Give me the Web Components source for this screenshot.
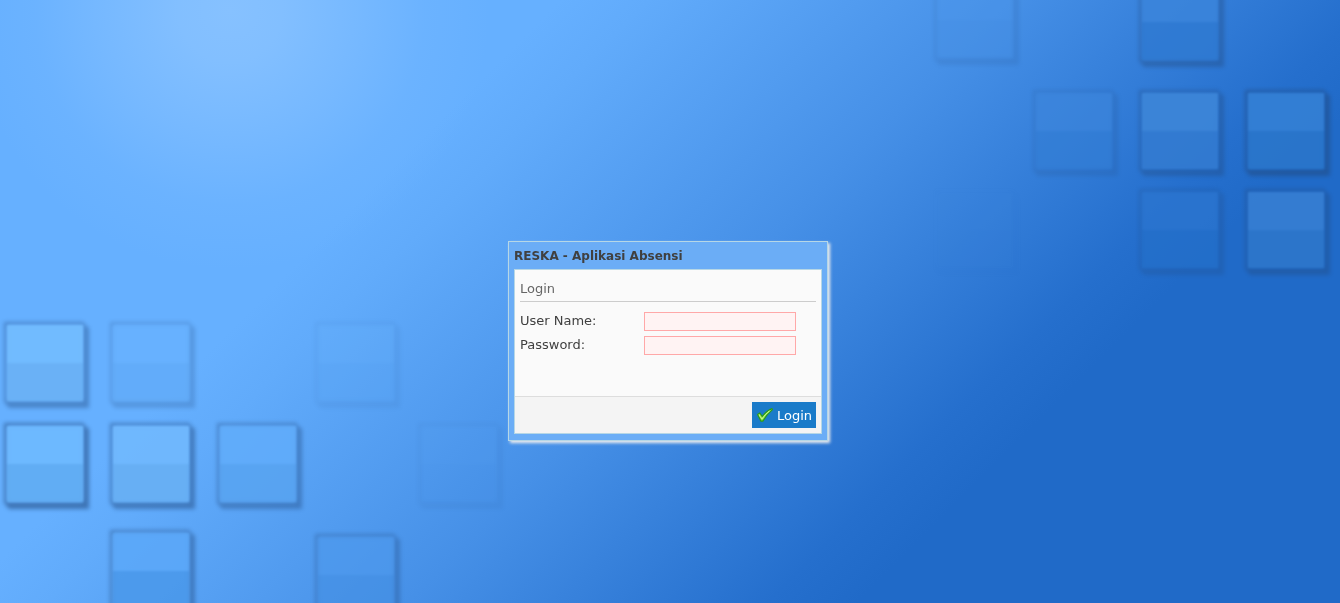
<!DOCTYPE html>
<html lang="id">
<head>
<meta charset="utf-8">
<title>RESKA - Aplikasi Absensi</title>
<style>
  html, body { margin: 0; height: 100%; }
  body { background: #226ac8; font: 13px/18px "DejaVu Sans", Verdana, sans-serif; color: #404040; }
</style>
</head>
<body>
<reska-desktop>
  <login-window heading="RESKA - Aplikasi Absensi">
    <login-form></login-form>
    <ok-button slot="footer">Login</ok-button>
  </login-window>
</reska-desktop>

<script>
  const define = (name, html, setup) => {
    const template = document.createElement('template');
    template.innerHTML = html;
    customElements.define(name, class extends HTMLElement {
      constructor() {
        super();
        this.attachShadow({ mode: 'open' }).append(template.content.cloneNode(true));
      }
      connectedCallback() { if (setup) setup(this, this.shadowRoot); }
    });
  };

  // Glass tiles: x, y, frame strength, sheen strength, upper colour, lower colour
  const tiles = [
    [4, 322, .42, .90, '#73bdff', '#6bb2f6'], [110, 322, .24, .60, '#68b2ff', '#61abf7'],
    [315, 322, .08, .25, '#65b0fa', '#5aa6f4'], [4, 423, .58, .90, '#6ebaff', '#61adf3'],
    [110, 423, .50, .90, '#71b9fe', '#68b0f4'], [217, 423, .42, .80, '#61adfb', '#58a4f1'],
    [418, 423, .07, .10, '#559fee', '#4891e6'], [110, 530, .46, .80, '#5ba8f9', '#4998ea'],
    [315, 534, .36, .60, '#4d99ed', '#4490e4'],
    [934, -21, .14, .35, '#4c96ea', '#4790e4'], [1139, -19, .42, .80, '#3b85db', '#2f7ad2'],
    [1033, 90, .18, .60, '#3d86dc', '#337ed5'], [1139, 90, .40, .90, '#3d86d8', '#337bd1'],
    [1245, 90, .56, .90, '#3480d5', '#2a76cb'], [1139, 189, .26, .70, '#2c76d0', '#2470ca'],
    [1245, 189, .42, .90, '#377fd3', '#2e77cb'], [934, 189, .01, .12, '#3c86dc', '#3a82d8']
  ];
  const tileMarkup = tiles.map(([x, y, frame, sheen, top, bottom]) => `
    <g transform="translate(${x} ${y})">
      <path d="M0 0H80V2L85 6V86H5L0 80ZM3 3V79H79V3Z" fill="#224a80" fill-rule="evenodd" opacity="${frame}" filter="url(#soft)"/>
      <g opacity="${sheen}" filter="url(#edge)">
        <path d="M3 3H79V42H3Z" fill="${top}"/>
        <path d="M3 41H79V79H3Z" fill="${bottom}"/>
      </g>
    </g>`).join('');

  define('reska-wallpaper', `
    <style>
      :host { display: block; }
      svg { display: block; width: 100%; height: 100%; }
    </style>
    <svg viewBox="0 0 1340 603" preserveAspectRatio="xMidYMid slice" aria-hidden="true">
      <defs>
        <linearGradient id="sky" gradientUnits="userSpaceOnUse" x1="280" y1="280" x2="730" y2="730">
          <stop offset="0" stop-color="#66b0ff"/>
          <stop offset=".1" stop-color="#61abfb"/>
          <stop offset=".5" stop-color="#4690e7"/>
          <stop offset=".9" stop-color="#256fcd"/>
          <stop offset="1" stop-color="#206ac8"/>
        </linearGradient>
        <radialGradient id="glow" gradientUnits="userSpaceOnUse" cx="230" cy="10" r="260">
          <stop offset="0" stop-color="#86c1ff"/>
          <stop offset=".2" stop-color="#86c1ff" stop-opacity=".88"/>
          <stop offset=".5" stop-color="#86c1ff" stop-opacity=".5"/>
          <stop offset=".75" stop-color="#86c1ff" stop-opacity=".16"/>
          <stop offset="1" stop-color="#86c1ff" stop-opacity="0"/>
        </radialGradient>
        <filter id="soft" x="-10%" y="-10%" width="120%" height="120%" color-interpolation-filters="sRGB"><feGaussianBlur stdDeviation="2"/></filter>
        <filter id="edge" x="-10%" y="-10%" width="120%" height="120%" color-interpolation-filters="sRGB"><feGaussianBlur stdDeviation="1"/></filter>
      </defs>
      <path fill="url(#sky)" d="M0 0H1340V603H0Z"/>
      <path fill="url(#glow)" d="M0 0H500V300H0Z"/>
      ${tileMarkup}
    </svg>`);

  define('reska-desktop', `
    <style>
      :host { display: grid; min-height: 100vh; }
      reska-wallpaper { position: fixed; inset: 0; }
      main { position: relative; display: grid; place-items: center; padding: 79px 4px 0 0; }
    </style>
    <reska-wallpaper></reska-wallpaper>
    <main><slot></slot></main>`);

  define('login-window', `
    <style>
      :host { display: block; box-sizing: border-box; width: 320px; max-width: 100%; padding: 5px 5px 6px;
        border: 1px solid #b6d7e6; background: #6badf6; box-shadow: 2px 2px 3px #eee; }
      h1 { margin: 0; height: 22px; font-size: 12px; line-height: 18px; font-weight: bold; }
      section { border: 1px solid #b6d7e6; background: #fafafa; }
      .body { box-sizing: border-box; min-height: 126px; padding: 5px; }
      footer { display: flex; justify-content: flex-end; padding: 5px; border-top: 1px solid #ddd; background: #f4f4f4; }
    </style>
    <h1></h1>
    <section>
      <div class="body"><slot></slot></div>
      <footer><slot name="footer"></slot></footer>
    </section>`,
    (host, root) => { root.querySelector('h1').textContent = host.getAttribute('heading'); });

  define('login-form', `
    <style>
      :host { display: block; }
      h2 { margin: 0 0 10px; padding: 5px 0 3px; border-bottom: 1px solid #ccc; font-size: 13px; line-height: 18px; font-weight: normal; color: #666; }
      form { display: grid; gap: 5px; }
      .row { display: grid; grid-template-columns: 124px 152px; height: 19px; }
      input { box-sizing: border-box; width: 100%; height: 19px; margin: 0; padding: 0 2px; border: 1px solid #ffa8a8;
        border-radius: 0; background: #fff3f3; font: inherit; font-size: 12px; color: #404040; outline: 0; }
    </style>
    <h2>Login</h2>
    <form>
      <div class="row"><label for="user">User Name:</label><input id="user" type="text" autocomplete="off"></div>
      <div class="row"><label for="pass">Password:</label><input id="pass" type="password" autocomplete="off"></div>
    </form>`);

  define('ok-button', `
    <style>
      :host { display: block; }
      button { display: flex; align-items: center; gap: 4px; height: 26px; margin: 0; padding: 1px 4px 0 5px; border: 0;
        background: #1a7bc9; color: #fff; font: inherit; cursor: pointer; }
      svg { width: 16px; height: 16px; }
    </style>
    <button type="button">
      <svg viewBox="0 0 16 16" aria-hidden="true">
        <defs><linearGradient id="leaf" x1="0" y1="0" x2="0" y2="1">
          <stop offset="0" stop-color="#b4f06a"/><stop offset="1" stop-color="#7ddc3c"/>
        </linearGradient></defs>
        <path d="M.6 6.4 2.8 5 5.2 8.4C8 4.8 11 2.2 15 .6L15.4 1.6C11.6 4.8 8.6 8 5.8 13.2L4 13.2Z" fill="url(#leaf)" stroke="#2a9a1c" stroke-width="1.2" stroke-linejoin="round"/>
        <path d="M2 6.8 5 11.2C7.2 7.6 9.4 5.2 12.4 3" fill="none" stroke="#c4f58c" stroke-width="1"/>
      </svg>
      <span><slot></slot></span>
    </button>`);
</script>
</body>
</html>
